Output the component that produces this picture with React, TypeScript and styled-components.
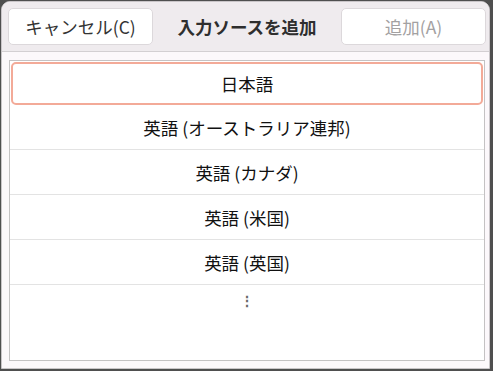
import styled, { createGlobalStyle } from 'styled-components';

const GlobalStyle = createGlobalStyle`
  html, body {
    margin: 0;
    padding: 0;
    background: #4f4f4f;
    overflow: hidden;
  }
  body {
    font-family: "Noto Sans CJK JP", "Noto Sans", sans-serif;
  }
`;

const Page = styled.div`
  width: 493px;
  height: 371px;
  padding: 1px 3px 2px 1px;
  box-sizing: border-box;
`;

const Window = styled.div`
  display: flex;
  flex-direction: column;
  height: 100%;
  background: #fcf8fb;
  border: 1px solid #c9c5c8;
  border-radius: 9px 9px 0 0;
  box-sizing: border-box;
  overflow: hidden;
`;

const HeaderBar = styled.div`
  display: grid;
  grid-template-columns: 145px 1fr 145px;
  align-items: center;
  height: 49px;
  padding: 0 3px 0 6px;
  background: #efebee;
  border-bottom: 1px solid #d3cfd2;
  flex-shrink: 0;
`;

const Button = styled.div<{ $disabled?: boolean }>`
  height: 37px;
  display: flex;
  align-items: center;
  justify-content: center;
  background: #ffffff;
  border: 1px solid #dcd8db;
  border-radius: 5px;
  box-sizing: border-box;
  font-size: 17.5px;
  color: ${(p) => (p.$disabled ? '#a3a1a2' : '#333333')};
`;

const Title = styled.div`
  text-align: center;
  font-size: 17.5px;
  font-weight: 700;
  color: #2e2e2e;
`;

const Body = styled.div`
  flex: 1;
  padding: 8px 4px 7px 7px;
  display: flex;
`;

const List = styled.div`
  flex: 1;
  background: #ffffff;
  border: 1px solid #c4c2c3;
  display: flex;
  flex-direction: column;
`;

const Row = styled.div<{ $selected?: boolean }>`
  height: 45px;
  display: flex;
  align-items: center;
  justify-content: center;
  font-size: 17.5px;
  color: #111111;
  box-sizing: border-box;
  border-bottom: 1px solid #e3e3e3;
  ${(p) =>
    p.$selected &&
    `
    margin: 1px 1px 0 1px;
    height: 43px;
    border: 2px solid #f3aa98;
    border-radius: 5px;
  `}
`;

const MoreRow = styled.div`
  height: 30px;
  display: flex;
  align-items: center;
  justify-content: center;
  color: #666666;
  font-size: 14px;
  font-weight: 700;
`;

const languages = ['英語 (オーストラリア連邦)', '英語 (カナダ)', '英語 (米国)', '英語 (英国)'];

const App = () => {
  return (
    <Page>
      <GlobalStyle />
      <Window>
        <HeaderBar>
          <Button>キャンセル(C)</Button>
          <Title>入力ソースを追加</Title>
          <Button $disabled>追加(A)</Button>
        </HeaderBar>
        <Body>
          <List>
            <Row $selected>日本語</Row>
            {languages.map((l) => (
              <Row key={l}>{l}</Row>
            ))}
            <MoreRow>⋮</MoreRow>
          </List>
        </Body>
      </Window>
    </Page>
  );
};

export default App;
